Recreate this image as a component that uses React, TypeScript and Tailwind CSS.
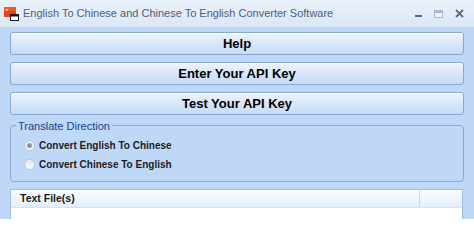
import { useState } from 'react';

const font = { fontFamily: '"Liberation Sans", Arial, sans-serif' };

function FlagIcon() {
  return (
    <svg width="16" height="16" viewBox="0 0 16 16" className="shrink-0">
      <rect x="0" y="1" width="12" height="10" fill="#e8401c" />
      <rect x="0" y="1" width="12" height="4" fill="#f26a3a" opacity="0.6" />
      <circle cx="3" cy="4" r="1.2" fill="#ffd23a" />
      <rect x="6.5" y="8.5" width="8" height="6" fill="#ffffff" stroke="#1a1a1a" strokeWidth="1" />
      <rect x="6.5" y="8.5" width="8" height="2" fill="#1a1a1a" />
    </svg>
  );
}

function WinButton({ label }: { label: string }) {
  return (
    <button className="h-[23px] rounded-[3px] border border-[#8aa8cf] bg-gradient-to-b from-[#eef4fc] via-[#d9e7f8] to-[#c5dbf6] text-[13px] font-bold text-black shadow-[inset_0_1px_0_#ffffff]">
      {label}
    </button>
  );
}

function Radio({ checked, label, onClick }: { checked: boolean; label: string; onClick: () => void }) {
  return (
    <label className="flex h-[12px] cursor-default items-center gap-[4px]" onClick={onClick}>
      <span className="flex h-[11px] w-[11px] items-center justify-center rounded-full border border-[#b7c7dd] bg-gradient-to-b from-[#e4ebf4] to-[#f7f9fc]">
        {checked && <span className="h-[5px] w-[5px] rounded-full bg-[#8a96a6]" />}
      </span>
      <span className="text-[10px] font-bold text-[#1c1c1c]">{label}</span>
    </label>
  );
}

export default function App() {
  const [dir, setDir] = useState<'en-zh' | 'zh-en'>('en-zh');

  return (
    <div style={font} className="flex h-[219px] w-[474px] flex-col overflow-hidden bg-[#bfd8f7]">
      {/* Title bar */}
      <div className="flex h-[27px] shrink-0 items-center bg-gradient-to-b from-[#eaf1fb] to-[#dbe7f7] pl-[4px] pr-[10px]">
        <FlagIcon />
        <span className="ml-[3px] text-[11px] text-[#4f5e73]">
          English To Chinese and Chinese To English Converter Software
        </span>
        <div className="ml-auto flex items-center gap-[12px]">
          <span className="mt-[4px] h-[2px] w-[7px] bg-[#5b6676]" />
          <span className="h-[8px] w-[9px] border border-t-[3px] border-[#a9b8cb] bg-[#eef3fa]" />
          <svg width="9" height="9" viewBox="0 0 9 9">
            <path d="M1 1 L8 8 M8 1 L1 8" stroke="#5e6b7c" strokeWidth="1.8" />
          </svg>
        </div>
      </div>

      {/* Body */}
      <div className="flex flex-1 flex-col pl-[10px] pr-[10px] pt-[5px]">
        <div className="flex flex-col gap-[7px]">
          <WinButton label="Help" />
          <WinButton label="Enter Your API Key" />
          <WinButton label="Test Your API Key" />
        </div>

        <div className="relative mt-[10px] h-[57px] rounded-[4px] border border-[#8ba9d0] pl-[13px] pt-[13px]">
          <span className="absolute -top-[8px] left-[5px] bg-[#bfd8f7] px-[2px] text-[11px] text-[#15428b]">
            Translate Direction
          </span>
          <div className="flex flex-col gap-[7px]">
            <Radio checked={dir === 'en-zh'} label="Convert English To Chinese" onClick={() => setDir('en-zh')} />
            <Radio checked={dir === 'zh-en'} label="Convert Chinese To English" onClick={() => setDir('zh-en')} />
          </div>
        </div>

        <div className="mr-[1px] mt-[7px] flex flex-1 flex-col border border-b-0 border-[#9fbbe0] bg-white">
          <div className="flex h-[18px] border-b border-[#d4e2f4] bg-gradient-to-b from-[#fbfcfe] to-[#e4eefb]">
            <div className="flex flex-1 items-center border-r border-[#c9d6e6] pl-[9px] text-[10.5px] font-bold text-[#1a1a1a]">
              Text File(s)
            </div>
            <div className="w-[42px]" />
          </div>
        </div>
      </div>
    </div>
  );
}
